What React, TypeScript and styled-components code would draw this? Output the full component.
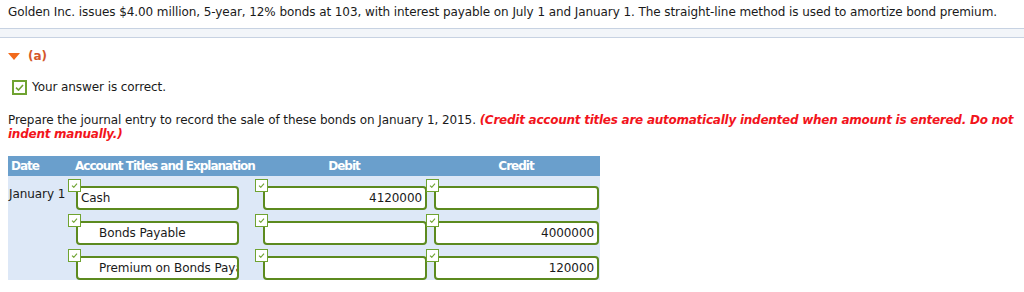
import styled, { createGlobalStyle } from "styled-components"

const GlobalStyle = createGlobalStyle`
    body {
        margin: 0;
        background: #ffffff;
        font-family: "DejaVu Sans", Verdana, sans-serif;
        font-size: 12px;
        letter-spacing: -0.08px;
        color: #1a1a1a;
    }
`

const Page = styled.div`
    padding: 4px 6px 0 8px;
    width: 1024px;
    box-sizing: border-box;
`

const Question = styled.p`
    margin: 0;
    line-height: 16px;
    white-space: nowrap;
`

const Divider = styled.div`
    margin: 8px -6px 0 -8px;
    height: 8px;
    background: #f2f5f9;
    border-top: 1px solid #c7d2e2;
    border-bottom: 1px solid #c7d2e2;
`

const PartHeader = styled.div`
    display: flex;
    align-items: center;
    gap: 8px;
    margin-top: 10px;
    line-height: 16px;
    color: #d4572a;
    font-weight: bold;
`

const Triangle = styled.span`
    width: 0;
    height: 0;
    border-left: 6px solid transparent;
    border-right: 6px solid transparent;
    border-top: 7px solid #f26a1b;
`

const Status = styled.div`
    display: flex;
    align-items: center;
    gap: 5px;
    margin: 15px 0 0 4px;
    line-height: 16px;
`

const Box = styled.span<{ $size: number }>`
    display: inline-flex;
    align-items: center;
    justify-content: center;
    box-sizing: border-box;
    width: ${(p) => p.$size}px;
    height: ${(p) => p.$size}px;
    background: #ffffff;
    border: ${(p) => (p.$size > 13 ? 2 : 1)}px solid #6fa331;
`

const Prompt = styled.p`
    margin: 18px 0 0 0;
    line-height: 14px;
`

const Note = styled.em`
    color: #f2141b;
    font-weight: bold;
    letter-spacing: -0.25px;
`

const Table = styled.div`
    margin-top: 15px;
    width: 592px;
`

const Grid = styled.div`
    display: grid;
    grid-template-columns: 60px 187px 171px 174px;
`

const Head = styled(Grid)`
    height: 20px;
    align-items: center;
    background: #6a9fcc;
    color: #ffffff;
    font-weight: bold;
    letter-spacing: -1px;
    white-space: nowrap;
`

const HeadCell = styled.div<{ $center?: boolean; $pad: number }>`
    padding-left: ${(p) => p.$pad}px;
    text-align: ${(p) => (p.$center ? "center" : "left")};
`

const Body = styled.div`
    background: #dde8f7;
    padding: 3px 0 0 0;
    display: flex;
    flex-direction: column;
    gap: 4px;
`

const DateCell = styled.div`
    padding: 8px 0 0 1px;
    line-height: 14px;
    white-space: nowrap;
`

const FieldCell = styled.div<{ $width: number }>`
    position: relative;
    padding: 7px 0 0 8px;
    & > input {
        width: ${(p) => p.$width}px;
    }
`

const BoxSpot = styled.span`
    position: absolute;
    left: 0;
    top: 0;
    display: flex;
`

const Field = styled.input<{ $indent?: number; $right?: boolean }>`
    box-sizing: border-box;
    height: 24px;
    margin: 0;
    padding: 0 ${(p) => (p.$right ? 3 : 0)}px 0 ${(p) => p.$indent ?? 3}px;
    border: 2px solid #5c8a1f;
    border-radius: 4px;
    background: #ffffff;
    font-family: "DejaVu Sans", Verdana, sans-serif;
    font-size: 12px;
    letter-spacing: -0.08px;
    color: #1a1a1a;
    text-align: ${(p) => (p.$right ? "right" : "left")};
    outline: none;
`

const Check = ({ size }: { size: number }) => (
    <Box $size={size}>
        <svg width={size > 13 ? 9 : 7} height={size > 13 ? 7 : 5} viewBox="0 0 9 7">
            <path d="M1 3.6 L3.5 6 L8 1" fill="none" stroke="#6fa331" strokeWidth="1.6" />
        </svg>
    </Box>
)

const Entry = ({ width, value, indent, right }: { width: number; value: string; indent?: number; right?: boolean }) => (
    <FieldCell $width={width}>
        <BoxSpot>
            <Check size={13} />
        </BoxSpot>
        <Field readOnly value={value} $indent={indent} $right={right} />
    </FieldCell>
)

const rows = [
    { date: "January 1", account: "Cash", indent: 3, debit: "4120000", credit: "" },
    { date: "", account: "Bonds Payable", indent: 21, debit: "", credit: "4000000" },
    { date: "", account: "Premium on Bonds Payable", indent: 21, debit: "", credit: "120000" },
]

export default function App() {
    return (
        <>
            <GlobalStyle />
            <Page>
                <Question>
                    Golden Inc. issues $4.00 million, 5-year, 12% bonds at 103, with interest payable on July 1 and January 1. The straight-line method is used to amortize bond premium.
                </Question>
                <Divider />
                <PartHeader>
                    <Triangle />
                    (a)
                </PartHeader>
                <Status>
                    <Check size={15} />
                    Your answer is correct.
                </Status>
                <Prompt>
                    Prepare the journal entry to record the sale of these bonds on January 1, 2015.{" "}
                    <Note>(Credit account titles are automatically indented when amount is entered. Do not indent manually.)</Note>
                </Prompt>
                <Table>
                    <Head>
                        <HeadCell $pad={3}>Date</HeadCell>
                        <HeadCell $pad={7}>Account Titles and Explanation</HeadCell>
                        <HeadCell $pad={7} $center>Debit</HeadCell>
                        <HeadCell $pad={6} $center>Credit</HeadCell>
                    </Head>
                    <Body>
                        {rows.map((r, i) => (
                            <Grid key={i}>
                                <DateCell>{r.date}</DateCell>
                                <Entry width={163} value={r.account} indent={r.indent} />
                                <Entry width={164} value={r.debit} right />
                                <Entry width={165} value={r.credit} right />
                            </Grid>
                        ))}
                    </Body>
                </Table>
            </Page>
        </>
    )
}
